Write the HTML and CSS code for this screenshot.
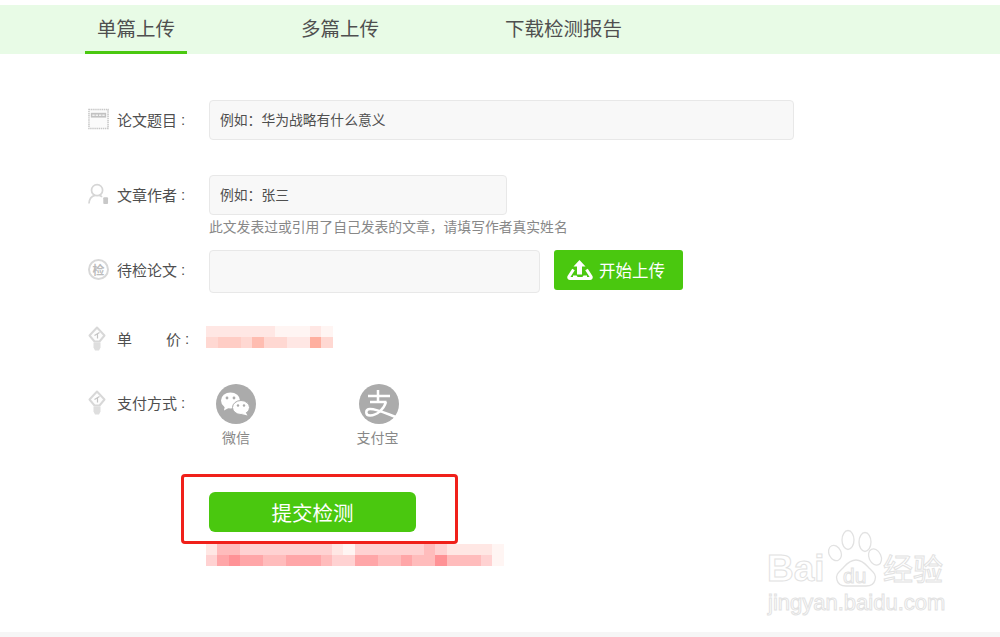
FILE: index.html
```html
<!DOCTYPE html>
<html lang="en">
<head>
    <meta charset="UTF-8">
    <meta name="viewport" content="width=device-width, initial-scale=1.0">
    <title>论文检测</title>
    <link rel="stylesheet" href="styles.css">
</head>
<body>
    <nav class="tabs">
        <a class="tab tab-active">单篇上传</a>
        <a class="tab tab-multi">多篇上传</a>
        <a class="tab tab-report">下载检测报告</a>
    </nav>

    <form class="form">
        <div class="row row-title">
            <label class="label">
                <svg class="icon" viewBox="0 0 22 22"><rect x="1" y="1" width="20" height="20" fill="#fbfbfb" stroke="#c8c8c8" stroke-width="1.600" stroke-dasharray="1.500 .7"/><rect x="3" y="4.500" width="16" height="5" fill="#c2c2c2"/><path d="M4.500 7h13" stroke="#f0f0f0" stroke-width="1.500" stroke-dasharray="2.500 1"/></svg>
                论文题目<span class="colon">:</span>
            </label>
            <input class="input input-long" placeholder="例如：华为战略有什么意义">
        </div>

        <div class="row row-author">
            <label class="label">
                <svg class="icon" viewBox="0 0 22 22"><circle cx="9.500" cy="7" r="5.800" fill="none" stroke="#d6d6d6" stroke-width="1.800"/><path d="M1 21c.3-4.500 2.500-7.500 6-8.500M12 12.500c1 .3 2 .9 2.600 1.700" fill="none" stroke="#d6d6d6" stroke-width="1.800"/><rect x="16" y="14.500" width="5" height="7" rx="1" fill="#c8c8c8"/></svg>
                文章作者<span class="colon">:</span>
            </label>
            <input class="input input-short" placeholder="例如：张三">
        </div>
        <p class="hint">此文发表过或引用了自己发表的文章，请填写作者真实姓名</p>

        <div class="row row-upload">
            <label class="label">
                <span class="icon icon-ring"><span>检</span></span>
                待检论文<span class="colon">:</span>
            </label>
            <div class="input input-file"></div>
            <button type="button" class="upload-btn">
                <svg class="upload-icon" viewBox="0 0 26 20"><path d="M12.500 0 18.500 6.500H15V14.500H10V6.500H6.500z" fill="#fff"/><path d="M6.500 9.500 2 16.500c-.6 1.100 0 2 1.200 2h19.600c1.200 0 1.800-.9 1.200-2L19.500 9.500" fill="none" stroke="#fff" stroke-width="3"/><path d="M6 15.500h3.500l1.500 2h4l1.500-2H20v3H6z" fill="#fff"/></svg>
                开始上传
            </button>
        </div>

        <div class="row row-price">
            <label class="label">
                <svg class="icon icon-pin" viewBox="0 0 18 25"><path d="M9 1.500 16.500 9.500 11.500 15.500H6.500L1.500 9.500z" fill="#fdfdfd" stroke="#d8d8d8" stroke-width="2" stroke-linejoin="round"/><path d="M6.500 9.500 11.500 6.500M9.500 8v4.500" stroke="#c4c4c4" stroke-width="1.200" fill="none"/><path d="M5.500 16.500h7v5l-1.500 3H7l-1.500-3z" fill="#dedede"/></svg>
                <span class="label-gap">单</span>价<span class="colon">:</span>
            </label>
            <div class="mosaic mosaic-price">
                <i class="m1"></i><i class="m1"></i><i class="m1"></i><i class="m1"></i><i class="m1"></i><i class="m1"></i><i class="m0"></i><i class="m0"></i><i class="m0"></i><i class="m1"></i><i class="m0"></i>
                <i class="m2"></i><i class="m3"></i><i class="m3"></i><i class="m2"></i><i class="m4"></i><i class="m2"></i><i class="m2"></i><i class="m1"></i><i class="m1"></i><i class="m5"></i><i class="m2"></i>
            </div>
        </div>

        <div class="row row-pay">
            <label class="label">
                <svg class="icon icon-pin" viewBox="0 0 18 25"><path d="M9 1.500 16.500 9.500 11.500 15.500H6.500L1.500 9.500z" fill="#fdfdfd" stroke="#d8d8d8" stroke-width="2" stroke-linejoin="round"/><path d="M6.500 9.500 11.500 6.500M9.500 8v4.500" stroke="#c4c4c4" stroke-width="1.200" fill="none"/><path d="M5.500 16.500h7v5l-1.500 3H7l-1.500-3z" fill="#dedede"/></svg>
                支付方式<span class="colon">:</span>
            </label>
            <div class="pay-list">
                <div class="pay-item pay-wechat">
                    <svg class="pay-circle" viewBox="0 0 40 40"><circle cx="20" cy="20" r="20" fill="#ababab"/><ellipse cx="14.500" cy="16.500" rx="9.500" ry="8" fill="#fff"/><path d="M9 21l-1 5.500 5.500-3z" fill="#fff"/><ellipse cx="25" cy="23.500" rx="8.500" ry="7" stroke="#ababab" fill="#fff"/><path d="M29.500 28l2 3.500-6-1.500z" fill="#fff"/><circle cx="11" cy="14" r="1.400" fill="#ababab"/><circle cx="18" cy="14" r="1.400" fill="#ababab"/><circle cx="22" cy="21.500" r="1.200" fill="#ababab"/><circle cx="28" cy="21.500" r="1.200" fill="#ababab"/></svg>
                    <span class="pay-name">微信</span>
                </div>
                <div class="pay-item pay-ali">
                    <svg class="pay-circle" viewBox="0 0 40 40"><circle cx="20" cy="20" r="20" fill="#ababab"/><path d="M9 12h22M19 6v12M11 18h16.500M27 18c-2 7-9 13.500-16 13.500-5 0-5-6.500 0-6.500 7 0 15 4 27 8.500" fill="none" stroke="#fff" stroke-width="2.500"/></svg>
                    <span class="pay-name">支付宝</span>
                </div>
            </div>
        </div>

        <button type="button" class="submit-btn">提交检测</button>
        <div class="mosaic mosaic-note">
            <i class="m1"></i><i class="n2"></i><i class="n2"></i><i class="n1"></i><i class="n1"></i><i class="n1"></i><i class="n1"></i><i class="n1"></i><i class="n1"></i><i class="n1"></i><i class="n1"></i><i class="m1"></i><i class="m0"></i><i class="n1"></i><i class="n1"></i><i class="n1"></i><i class="n1"></i><i class="n1"></i><i class="n1"></i><i class="n2"></i><i class="n1"></i><i class="m1"></i><i class="m1"></i><i class="m1"></i><i class="m1"></i><i class="m0"></i>
            <i class="n1"></i><i class="n3"></i><i class="n4"></i><i class="n3"></i><i class="n3"></i><i class="n2"></i><i class="n2"></i><i class="n3"></i><i class="n3"></i><i class="n3"></i><i class="n2"></i><i class="n1"></i><i class="n1"></i><i class="n3"></i><i class="n3"></i><i class="n2"></i><i class="n2"></i><i class="n3"></i><i class="n2"></i><i class="n2"></i><i class="n4"></i><i class="n2"></i><i class="n2"></i><i class="n2"></i><i class="n1"></i><i class="m0"></i>
        </div>
        <div class="red-box"></div>
    </form>

    <div class="watermark">
        <svg class="paw" viewBox="0 0 56 60"><g fill="#fff" stroke="#e2e2e2" stroke-width="1.300"><ellipse cx="7" cy="24" rx="6" ry="8" transform="rotate(-25 7 24)"/><ellipse cx="20" cy="11" rx="6" ry="9.500"/><ellipse cx="37" cy="13" rx="6" ry="9.500"/><ellipse cx="47" cy="28" rx="6" ry="8.500" transform="rotate(-25 47 28)"/><path d="M28 31c7 0 10 5 13 8 4 4 8 7 6 12-1 4-5 6-9 6H18c-4 0-8-2-9-6-2-5 2-8 6-12 3-3 6-8 13-8z"/></g></svg>
        <span class="wm-bai">Bai</span><span class="wm-du">du</span><span class="wm-cn">经验</span>
        <span class="wm-url">jingyan.baidu.com</span>
    </div>
    <div class="footer-strip"></div>
</body>
</html>
```

FILE: styles.css
```css
/* page */
html, body {
    margin: 0;
    padding: 0;
}

body {
    position: relative;
    height: 637px;
    overflow: hidden;
    background-color: #fff;
    color: #555;
    font-family: "Liberation Sans", "Noto Sans CJK SC", sans-serif;
    padding-top: 5px;
    box-sizing: border-box;
}

/* tabs */
.tabs {
    display: flex;
    height: 49px;
    padding-left: 85px;
    background-color: #e8fbe6;
}

.tab {
    font-size: 19.500px;
    line-height: 48px;
    height: 46px;
    color: #4f4f4f;
    text-align: center;
}

.tab-active {
    width: 102px;
    border-bottom: 3px solid #4ac80f;
}

.tab-multi {
    margin-left: 114px;
}

.tab-report {
    margin-left: 126px;
}

/* form */
.form {
    position: relative;
    padding: 46px 0 0 88px;
}

.row {
    display: flex;
    align-items: center;
}

.label {
    display: flex;
    align-items: center;
    box-sizing: border-box;
    width: 121px;
    padding-bottom: 2px;
    flex-shrink: 0;
    font-size: 15px;
    color: #4f4f4f;
    white-space: nowrap;
}

.colon {
    margin-left: 4px;
}

.icon {
    width: 21px;
    height: 22px;
    margin-right: 8px;
    flex-shrink: 0;
}

.icon-pin {
    width: 18px;
    height: 25px;
    margin-right: 11px;
}

.icon-ring {
    display: flex;
    align-items: center;
    justify-content: center;
    box-sizing: border-box;
    width: 21px;
    height: 21px;
    border: 2px solid #d8d8d8;
    border-radius: 50%;
    color: #bbb;
    font-size: 12px;
    font-weight: bold;
}

.label-gap {
    margin-right: 34px;
}

.input {
    box-sizing: border-box;
    height: 40px;
    padding: 0 10px;
    border: 1px solid #e8e8e8;
    border-radius: 4px;
    background-color: #f8f8f8;
    font-family: inherit;
    font-size: 13.800px;
    color: #555;
}

.input::placeholder {
    color: #4f4f4f;
    opacity: 1;
}

.input-long {
    width: 585px;
}

.input-short {
    width: 298px;
}

.input-file {
    width: 331px;
    height: 43px;
}

.row-author {
    margin-top: 35px;
}

.hint {
    margin: 3px 0 0 121px;
    height: 20px;
    line-height: 20px;
    font-size: 13.800px;
    color: #888;
}

.row-upload {
    margin-top: 12px;
    align-items: flex-start;
}

.row-upload .label {
    height: 40px;
}

.upload-btn {
    display: flex;
    align-items: center;
    justify-content: center;
    width: 129px;
    height: 40px;
    margin-left: 14px;
    padding: 0 5px 0 0;
    border: 0;
    border-radius: 3px;
    background-color: #4ac80f;
    color: #fff;
    font-family: inherit;
    font-size: 16.500px;
}

.upload-icon {
    width: 26px;
    height: 20px;
    margin-right: 6px;
}

.row-price {
    margin-top: 35px;
    height: 22px;
}

.row-pay {
    margin-top: 34px;
    align-items: flex-start;
}

.row-pay .label {
    margin-top: 6px;
}

/* mosaics hide the blurred values */
.mosaic {
    display: grid;
    grid-auto-rows: 11px;
    margin-left: -3px;
}

.mosaic-price {
    grid-template-columns: repeat(11, 11.500px);
    margin-bottom: 4px;
}

.mosaic-note {
    grid-template-columns: repeat(26, 11.460px);
    margin: 12px 0 0 118px;
}

.m0 { background-color: #fff5f3; }
.m1 { background-color: #ffe7e4; }
.m2 { background-color: #ffd8d2; }
.m3 { background-color: #ffcdc5; }
.m4 { background-color: #ffbdb1; }
.m5 { background-color: #ffaf9f; }
.n1 { background-color: #ffd2d2; }
.n2 { background-color: #ffbcbc; }
.n3 { background-color: #ffa6a8; }
.n4 { background-color: #ff9296; }

/* payment */
.pay-list {
    display: flex;
}

.pay-item {
    display: flex;
    flex-direction: column;
    align-items: center;
    width: 40px;
}

.pay-wechat {
    margin-left: 7px;
}

.pay-ali {
    margin-left: 103px;
}

.pay-circle {
    display: block;
    width: 40px;
    height: 40px;
}

.pay-name {
    margin-top: 5px;
    font-size: 14px;
    line-height: 18px;
    color: #888;
    white-space: nowrap;
}

.pay-ali .pay-name {
    margin-left: -3px;
}

/* submit */
.submit-btn {
    display: block;
    width: 207px;
    height: 40px;
    margin: 45px 0 0 121px;
    padding: 0;
    border: 0;
    border-radius: 6px;
    background-color: #4ac80f;
    color: #fff;
    font-family: inherit;
    font-size: 20.500px;
}

.red-box {
    position: absolute;
    left: 181px;
    top: 420px;
    width: 271px;
    height: 64px;
    border: 3px solid #f0201a;
    border-radius: 4px;
}

/* watermark */
.watermark {
    position: absolute;
    left: 766px;
    top: 529px;
    width: 190px;
    height: 90px;
    color: #fff;
    -webkit-text-stroke: 1px #e2e2e2;
}

.paw {
    position: absolute;
    left: 62px;
    top: 0;
    width: 56px;
    height: 60px;
}

.wm-bai,
.wm-du,
.wm-cn,
.wm-url {
    position: absolute;
}

.wm-bai {
    left: 1px;
    top: 20px;
    font-size: 37px;
    line-height: 40px;
    font-weight: bold;
}

.wm-du {
    left: 77px;
    top: 34px;
    font-size: 21px;
    line-height: 26px;
}

.wm-cn {
    left: 117px;
    top: 23px;
    font-size: 30px;
    line-height: 36px;
    white-space: nowrap;
}

.wm-url {
    left: 2px;
    top: 60px;
    font-size: 22px;
    line-height: 28px;
    white-space: nowrap;
}

.footer-strip {
    position: absolute;
    left: 0;
    right: 0;
    bottom: 0;
    height: 5px;
    background-color: #f6f6f6;
}
```
